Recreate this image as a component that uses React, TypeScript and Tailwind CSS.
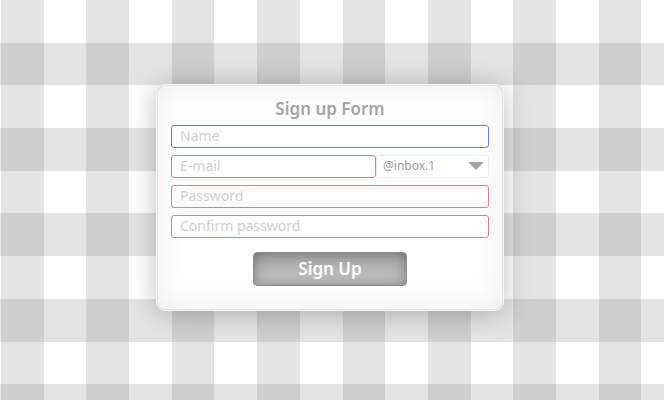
import type { InputHTMLAttributes } from "react";

type FieldProps = InputHTMLAttributes<HTMLInputElement> & {
  label: string;
  tone?: "blue" | "red";
};

function Field({ label, tone = "red", ...rest }: FieldProps) {
  const border = tone === "blue" ? "border-[#667fde]" : "border-[#d08486]";
  return (
    <input
      aria-label={label}
      placeholder={label}
      className={`block h-[23px] w-full min-w-0 rounded-[3px] border bg-white px-2 pb-[3px] text-[14px] text-[#a5a5a5] outline-none placeholder:text-[#cfcfcf] ${border}`}
      {...rest}
    />
  );
}

export default function App() {
  return (
    <main className="flex min-h-screen items-center justify-center bg-white bg-[repeating-linear-gradient(180deg,transparent_0_6.43vw,rgba(133,133,133,0.222)_6.43vw_12.86vw),repeating-linear-gradient(90deg,rgba(133,133,133,0.222)_0_6.43vw,transparent_6.43vw_12.86vw)] bg-[position:0_0,1px_0] pr-5 pl-4 font-['Noto_Sans',sans-serif]">
      <form
        onSubmit={(event) => event.preventDefault()}
        className="mb-[5px] w-full max-w-[348px] rounded-[9px] border border-[#f4f4f4] bg-[#e2e2e2] p-px shadow-[0_2px_28px_rgba(0,0,0,0.26)]"
      >
        <div className="rounded-[8px] border border-[#f8f8f8] bg-white px-3 pt-[10px] pb-[22px] shadow-[inset_0_0_28px_rgba(0,0,0,0.08)]">
          <h1 className="text-center text-[17px] leading-6 font-semibold text-[#a5a5a5]">
            Sign up Form
          </h1>
          <div className="mt-1 flex flex-col gap-[7px]">
            <Field label="Name" tone="blue" type="text" />
            <div className="flex">
              <div className="min-w-0 flex-[205]">
                <Field label="E-mail" type="text" inputMode="email" />
              </div>
              <div className="relative min-w-0 flex-[113]">
                <select
                  aria-label="E-mail domain"
                  className="block h-[23px] w-full appearance-none rounded-[3px] border border-[#ececec] bg-white px-[6px] pb-[2px] text-[12px] text-[#9c9c9c] outline-none"
                >
                  <option>@inbox.1</option>
                </select>
                <svg
                  aria-hidden="true"
                  viewBox="0 0 16 8"
                  className="pointer-events-none absolute top-[7px] right-[5px] h-2 w-4 fill-[#a5a5a5]"
                >
                  <path d="M0 0h16L8 8z" />
                </svg>
              </div>
            </div>
            <Field label="Password" type="password" />
            <Field label="Confirm password" type="password" />
          </div>
          <button
            type="submit"
            className="mx-auto mt-[14px] block h-[34px] w-[154px] rounded-[4px] border border-[#8a8a8a] bg-linear-to-b from-[#a4a4a4] to-[#c8c8c8] pb-px text-[17px] font-semibold text-white shadow-[inset_0_0_14px_rgba(0,0,0,0.35)]"
          >
            Sign Up
          </button>
        </div>
      </form>
    </main>
  );
}
